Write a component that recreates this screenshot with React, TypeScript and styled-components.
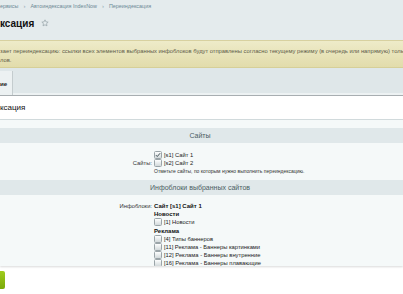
import React from "react";
import styled, { createGlobalStyle } from "styled-components";

const GlobalStyle = createGlobalStyle`
  html, body {
    margin: 0;
    padding: 0;
    width: 403px;
    height: 294px;
    overflow: hidden;
    background: #e4ebed;
    font-family: "Liberation Sans", Arial, sans-serif;
  }
`;

const Page = styled.div`
  display: flex;
  flex-direction: column;
  width: 403px;
  height: 294px;
  overflow: hidden;
`;

const Top = styled.div`
  height: 40px;
  display: flex;
  flex-direction: column;
`;

const Breadcrumbs = styled.div`
  display: flex;
  align-items: center;
  gap: 5px;
  height: 11px;
  font-size: 5.4px;
  color: #6c8995;
  white-space: nowrap;
`;

const Sep = styled.span`
  color: #8ea3ad;
  font-size: 6px;
`;

const TitleRow = styled.div`
  display: flex;
  align-items: center;
  gap: 7px;
  margin-top: 6px;
  height: 12px;
`;

const Title = styled.h1`
  margin: 0;
  font-size: 10px;
  font-weight: bold;
  color: #111;
`;

const Notice = styled.div`
  height: 28px;
  box-sizing: border-box;
  border-top: 1px solid #d8d1a0;
  border-bottom: 1px solid #d6cf98;
  background: linear-gradient(#eeebc9, #e2dcab);
  padding-top: 6px;
  font-size: 5.8px;
  line-height: 9px;
  color: #5d5b48;
  white-space: nowrap;
  overflow: hidden;
`;

const TabStrip = styled.div`
  height: 28px;
  box-sizing: border-box;
  display: flex;
  align-items: flex-end;
  background: #dfe7e9;
  border-bottom: 1px solid #a8aeb1;
  box-shadow: inset 0 -2px 0 #edf2f3;
`;

const Tab = styled.div`
  height: 24px;
  width: 12px;
  display: flex;
  align-items: center;
  background: #ecf1f2;
  border-right: 1px solid #c4ccce;
  font-size: 6.2px;
  font-weight: bold;
  color: #222;
`;

const ContentHead = styled.div`
  height: 23px;
  display: flex;
  align-items: center;
  background: #fff;
  border-bottom: 1px solid #d3dcde;
  font-size: 8px;
  color: #111;
`;

const Panel = styled.div`
  height: 146px;
  overflow: hidden;
  background: #f5f9f9;
  padding-top: 8px;
  box-sizing: border-box;
  box-shadow: 0 1px 2px rgba(0, 0, 0, 0.15);
  position: relative;
  z-index: 1;
`;

const SectionHead = styled.div`
  height: 15px;
  display: flex;
  align-items: center;
  justify-content: center;
  padding-right: 3px;
  background: #e0e8ea;
  font-size: 7px;
  color: #4b5d63;
`;

const FieldRow = styled.div<{ $align: "center" | "flex-start"; $top: number; $bottom: number }>`
  display: grid;
  grid-template-columns: 152px 1fr;
  column-gap: 2px;
  align-items: ${(p) => p.$align};
  padding: ${(p) => p.$top}px 0 ${(p) => p.$bottom}px;
`;

const Label = styled.div`
  text-align: right;
  font-size: 5.8px;
  line-height: 8px;
  color: #333;
`;

const Values = styled.div`
  display: flex;
  flex-direction: column;
`;

const CheckLine = styled.label`
  display: flex;
  align-items: center;
  gap: 2px;
  height: 8px;
  font-size: 5.8px;
  color: #222;
  white-space: nowrap;
`;

const Box = styled.span`
  width: 6px;
  height: 6px;
  border: 1px solid #9aa4a8;
  border-radius: 1.5px;
  background: linear-gradient(#fdfefe, #d2d9db);
  display: flex;
  align-items: center;
  justify-content: center;
  flex: none;
`;

const Hint = styled.div`
  font-size: 5px;
  line-height: 8px;
  color: #333;
  white-space: nowrap;
`;

const GroupTitle = styled.div<{ $gap?: number }>`
  font-size: 6px;
  line-height: 8px;
  font-weight: bold;
  color: #111;
  margin-top: ${(p) => p.$gap ?? 0}px;
`;

const Footer = styled.div`
  flex: 1;
  background: #fff;
  padding-top: 5px;
`;

const SaveButton = styled.button`
  display: block;
  width: 5px;
  height: 18px;
  padding: 0;
  border: none;
  border-radius: 0 2px 2px 0;
  background: linear-gradient(#9fcc1c, #7aa90a);
`;

function Star() {
  return (
    <svg width="8" height="8" viewBox="0 0 24 24" fill="none" stroke="#97a4aa" strokeWidth="2.2" strokeLinejoin="round">
      <path d="M12 2.5l2.9 6.1 6.6.8-4.9 4.6 1.3 6.6L12 17.3l-5.9 3.3 1.3-6.6L2.5 9.4l6.6-.8z" />
    </svg>
  );
}

function Check({ checked }: { checked?: boolean }) {
  return (
    <Box>
      {checked && (
        <svg width="6" height="6" viewBox="0 0 10 10">
          <path d="M1.5 5.2l2.3 2.3L8.6 2" fill="none" stroke="#3c4a50" strokeWidth="1.6" />
        </svg>
      )}
    </Box>
  );
}

const reklama = [
  "[4] Типы баннеров",
  "[11] Реклама - Баннеры картинками",
  "[12] Реклама - Баннеры внутренние",
  "[16] Реклама - Баннеры плавающие",
  "[17] Реклама - Баннеры всплывающие",
];

function App() {
  return (
    <Page>
      <GlobalStyle />
      <Top>
        <Breadcrumbs>
          <span>ервисы</span>
          <Sep>›</Sep>
          <span>Автоиндексация IndexNow</span>
          <Sep>›</Sep>
          <span>Переиндексация</span>
        </Breadcrumbs>
        <TitleRow>
          <Title>ксация</Title>
          <Star />
        </TitleRow>
      </Top>
      <Notice>
        зает переиндексацию: ссылки всех элементов выбранных инфоблоков будут отправлены согласно текущему режиму (в очередь или напрямую) только
        <br />
        лов.
      </Notice>
      <TabStrip>
        <Tab>ие</Tab>
      </TabStrip>
      <ContentHead>ксация</ContentHead>
      <Panel>
        <SectionHead>Сайты</SectionHead>
        <FieldRow $align="center" $top={8} $bottom={5}>
          <Label>Сайты:</Label>
          <Values>
            <CheckLine>
              <Check checked />
              [s1] Сайт 1
            </CheckLine>
            <CheckLine>
              <Check />
              [s2] Сайт 2
            </CheckLine>
            <Hint>Отметьте сайты, по которым нужно выполнить переиндексацию.</Hint>
          </Values>
        </FieldRow>
        <SectionHead>Инфоблоки выбранных сайтов</SectionHead>
        <FieldRow $align="flex-start" $top={6.5} $bottom={6}>
          <Label>Инфоблоки:</Label>
          <Values>
            <GroupTitle>Сайт [s1] Сайт 1</GroupTitle>
            <GroupTitle>Новости</GroupTitle>
            <CheckLine>
              <Check />
              [1] Новости
            </CheckLine>
            <GroupTitle $gap={1}>Реклама</GroupTitle>
            {reklama.map((r) => (
              <CheckLine key={r}>
                <Check />
                {r}
              </CheckLine>
            ))}
          </Values>
        </FieldRow>
      </Panel>
      <Footer>
        <SaveButton aria-label="Сохранить" />
      </Footer>
    </Page>
  );
}

export default App;
